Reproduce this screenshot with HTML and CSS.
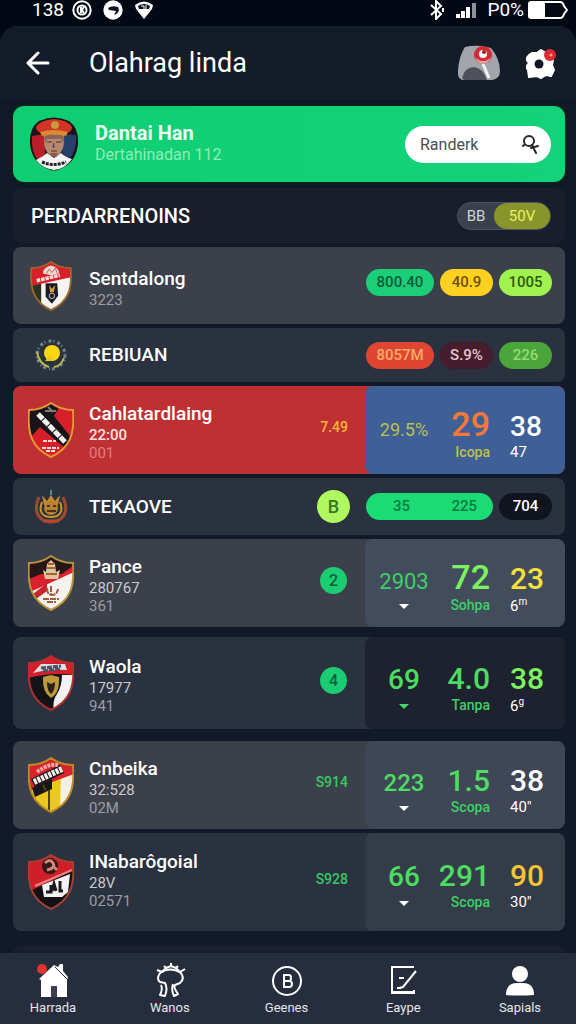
FILE: index.html
```html
<!DOCTYPE html>
<html lang="id">

<head>
    <meta charset="utf-8">
    <meta name="viewport" content="width=device-width, initial-scale=1">
    <title>Olahrag linda</title>
    <link rel="stylesheet" href="styles.css">
</head>

<body>
    <!-- shared shield outline -->
    <svg class="defs" width="0" height="0" aria-hidden="true">
        <defs>
            <path id="shield" d="M23 1C30 6 37 8 45 8C47 32 42 46 23 55C4 46 -1 32 1 8C9 8 16 6 23 1Z" />
            <clipPath id="shieldClip"><use href="#shield" /></clipPath>
        </defs>
    </svg>

    <div class="statusBar">
        <span>138</span>
        <svg width="20" height="20" viewBox="0 0 20 20" fill="none" stroke="#fff" stroke-width="2">
            <circle cx="10" cy="10" r="8.700" />
            <circle cx="10" cy="10" r="4.500" />
            <path d="M9 7v6M12 7l-2 3 2 3" stroke-width="2" />
        </svg>
        <svg class="gapLeft" width="20" height="20" viewBox="0 0 20 20">
            <circle cx="10" cy="10" r="9.700" fill="#fff" />
            <path d="M5 8q4-3 10-1l1 3q-1 4-5 5l2-4-7-1z" fill="#0b111c" />
        </svg>
        <svg class="gapLeft" width="20" height="20" viewBox="0 0 20 20">
            <path d="M1 5Q10-2 19 5L18 9 10 19 2 9z" fill="#fff" />
            <path d="M4 6q6-4 12 0l-1 3H5z" fill="#0b111c" />
            <path d="M7 6h3v4M12 5v5" stroke="#fff" fill="none" />
        </svg>
        <div class="statusRight">
            <svg width="16" height="20" viewBox="0 0 16 20" fill="none" stroke="#fff" stroke-width="2">
                <path d="M2 5l10 9-5 5V1l5 5-10 9M14 8v4" />
            </svg>
            <svg class="signal" width="21" height="17" viewBox="0 0 21 17" fill="#fff">
                <path d="M0 12h4v4H0zM5 9h4v7H5zM10 5h4v11h-4z" />
                <path d="M16 1h4v15h-4z" fill="#8c929c" />
            </svg>
            <span>P0%</span>
            <svg width="40" height="18" viewBox="0 0 40 18">
                <path d="M3 1h29q3 0 4 4l3 4-3 4q-1 4-4 4H3q-2 0-2-2V3q0-2 2-2z" fill="#050a14" stroke="#fff" stroke-width="2" />
                <path d="M2 2h15v14H2z" fill="#fff" />
            </svg>
        </div>
    </div>

    <div class="app">
        <header class="appBar">
            <button class="iconBtn" type="button" aria-label="Kembali">
                <svg width="24" height="24" viewBox="0 0 24 24" fill="none" stroke="#fff" stroke-width="3" stroke-linecap="round" stroke-linejoin="round">
                    <path d="M22 12H3M12 2L2 12l10 10" />
                </svg>
            </button>
            <h1>Olahrag linda</h1>
            <button class="iconBtn" type="button" aria-label="Cari pemain">
                <svg width="42" height="36" viewBox="0 0 42 36">
                    <path d="M7 2Q20-1 33 3Q42 14 42 26Q42 34 34 35H5Q-1 34 0 25Q1 11 7 2Z" fill="#a2a5ab" />
                    <path d="M4 33Q7 22 16 22Q25 23 29 35H6Z" fill="#4e515a" />
                    <path d="M25 19l6 14" stroke="#f2f2f2" stroke-width="3" />
                    <circle cx="25" cy="10" r="9" fill="#d22a30" />
                    <path d="M17 12q2 7 8 7t8-7q-3 4-8 4t-8-4z" fill="#d9a5a6" />
                    <circle cx="25" cy="9" r="4" fill="#fff" />
                    <circle cx="26" cy="7" r="2" fill="#8e1c24" />
                </svg>
            </button>
            <button class="iconBtn gear" type="button" aria-label="Setelan">
                <svg width="30" height="31" viewBox="0 0 30 31">
                    <path d="M6 5l5 0 4-3 5 3 6 1 1 6-1 5 2 5-3 6-5-1-5 3-4-2-8 1-1-7-2-3 3-4-3-4 3-4z" fill="#fff" stroke="#fff" stroke-width="2" stroke-linejoin="round" />
                    <circle cx="13" cy="16" r="4.500" fill="#101624" />
                    <circle cx="24" cy="7" r="6" fill="#dc2b30" />
                    <circle cx="25" cy="7" r="1.500" fill="#f79a9c" />
                </svg>
            </button>
        </header>

        <main class="list">
            <section class="banner">
                <svg class="avatar" width="50" height="54" viewBox="0 0 50 54">
                    <path d="M10 4Q25-3 40 4Q50 11 49 27Q47 46 31 52Q25 55 19 52Q3 46 1 27Q0 11 10 4Z" fill="#1c1419" />
                    <path d="M3 19l13-2v21L9 43Q2 35 3 19z" fill="#b81f28" />
                    <path d="M34 17l13 1Q48 34 40 42l-7-4z" fill="#263f6d" />
                    <path d="M7 43Q15 39 18 36l7 5 7-5q4 4 11 6Q36 52 25 53 13 51 7 43z" fill="#f4f4f2" />
                    <path d="M15 17h20q1 13-3 18-3 5-7 5t-7-5q-4-6-3-18z" fill="#b48871" />
                    <path d="M15 20q3-3 10-2 8-1 10 2l-1 7-2-5H18l-2 5z" fill="#8e6450" />
                    <path d="M18 25h5M27 25h5M22 34h6M25 26l-1 4h2" stroke="#4a2e27" stroke-width="1" fill="none" />
                    <path d="M21 36h8l-2 4h-4z" fill="#8a5a48" />
                    <path d="M7 10Q11 3 25 2 39 3 43 10 43 15 38 16H12Q7 14 7 10z" fill="#d13325" />
                    <path d="M11 15q14-4 28 0l-2 4q-12-4-24 0z" fill="#dc8a2e" />
                    <circle cx="26" cy="8" r="4" fill="#c9973c" />
                    <path d="M13 45q12 5 24 0" stroke="#22222a" stroke-width="3" stroke-dasharray="3 1" fill="none" />
                </svg>
                <div class="info">
                    <h2>Dantai Han</h2>
                    <p>Dertahinadan 112</p>
                </div>
                <form class="search">
                    <input type="text" aria-label="Cari" placeholder="Randerk">
                    <button class="iconBtn" type="button" aria-label="Cari">
                        <svg width="18" height="20" viewBox="0 0 18 20" fill="none" stroke="#26282c" stroke-width="2" stroke-linecap="round">
                            <circle cx="8" cy="7" r="5" />
                            <path d="M3 11l-1 1M11 11l4 8M10 14l7-2" />
                        </svg>
                    </button>
                </form>
            </section>

            <section class="row heading">
                <h2>PERDARRENOINS</h2>
                <div class="toggle">
                    <button type="button">BB</button>
                    <button type="button" class="on">50V</button>
                </div>
            </section>

            <section class="row light medium">
                <div class="crest">
                    <svg width="42" height="50" viewBox="0 0 46 56">
                        <g clip-path="url(#shieldClip)">
                            <path d="M0 0h46v56H0z" fill="#f5f4f1" />
                            <path d="M0 27l12-2v25L0 40z" fill="#2b3420" />
                            <path d="M0 0h46v18L0 28z" fill="#d8202a" />
                            <path d="M14 14q0-7 9-9 9 2 9 9l-9 2z" fill="#eed9d1" />
                            <path d="M18 14l3-5 3 4 4-5 2 6" stroke="#aa6255" fill="none" />
                            <path d="M7 22l26-6" stroke="#f6dede" stroke-width="4" stroke-dasharray="4 1" />
                            <path d="M17 25h13l1 14-7 9-7-8z" fill="#1b1c25" />
                            <path d="M21 27l3 4 4-4-2 8h-4z" fill="#dc9b34" />
                            <circle cx="24" cy="39" r="3" fill="none" stroke="#d8dae0" />
                        </g>
                        <use href="#shield" fill="none" stroke="#9c6a2c" stroke-width="2" />
                    </svg>
                </div>
                <div class="info">
                    <h3>Sentdalong</h3>
                    <p class="dim">3223</p>
                </div>
                <div class="pills">
                    <span class="pill wide green">800.40</span>
                    <span class="pill yellow">40.9</span>
                    <span class="pill lime">1005</span>
                </div>
            </section>

            <section class="row small">
                <div class="crest">
                    <svg width="36" height="34" viewBox="0 0 36 34">
                        <circle cx="18" cy="17" r="14" fill="none" stroke="#71868b" stroke-width="3" stroke-dasharray="3 2 1 3" />
                        <path d="M4 14q2 12 12 15M31 20q-3 8-10 9" fill="none" stroke="#b4b950" stroke-width="2" />
                        <circle cx="18" cy="16" r="10" fill="#26333a" />
                        <circle cx="19" cy="15" r="8" fill="#f8d613" />
                        <path d="M12 23l5-6 4 6z" fill="#e8cb1c" />
                    </svg>
                </div>
                <div class="info">
                    <h3>REBIUAN</h3>
                </div>
                <div class="pills">
                    <span class="pill wide red">8057M</span>
                    <span class="pill maroon">S.9%</span>
                    <span class="pill moss">226</span>
                </div>
            </section>

            <section class="row live">
                <div class="crest">
                    <svg width="46" height="56" viewBox="0 0 46 56">
                        <g clip-path="url(#shieldClip)">
                            <path d="M0 0h46v56H0z" fill="#d61f28" />
                            <path d="M0 0h34L26 14 45 38 38 47 12 25 0 38z" fill="#17151a" />
                            <path d="M10 12l27 28" stroke="#f4f1ef" stroke-width="5" stroke-dasharray="7 1" />
                            <path d="M17 9h11M20 5l5 5" stroke="#7c7d77" stroke-width="2" />
                            <path d="M15 39h13M14 46h17M18 49h9" stroke="#f4dcda" stroke-width="2" stroke-dasharray="4 1" />
                        </g>
                        <use href="#shield" fill="none" stroke="#e59a35" stroke-width="2" />
                    </svg>
                </div>
                <div class="info">
                    <h3>Cahlatardlaing</h3>
                    <p class="strong">22:00</p>
                    <p class="faint">001</p>
                </div>
                <span class="mark gold">7.49</span>
                <div class="stats blue">
                    <div class="stat first gold2">
                        <div class="value"><span class="n18">29.5%</span></div>
                    </div>
                    <div class="stat second">
                        <div class="value orange"><span class="n34">29</span></div>
                        <div class="label gold2">Icopa</div>
                    </div>
                    <div class="stat third">
                        <div class="value"><span class="n28">38</span></div>
                        <div class="label">47</div>
                    </div>
                </div>
            </section>

            <section class="row small total">
                <div class="crest">
                    <svg width="36" height="36" viewBox="0 0 36 36" fill="none">
                        <path d="M6 8Q-1 24 10 31q8 4 16 0Q37 24 30 8" stroke="#a04a2e" stroke-width="3" />
                        <path d="M9 13Q5 23 12 27q6 2 12 0 7-4 3-14" stroke="#c7962f" stroke-width="2" />
                        <path d="M9 6l5 6 4-6 4 6 5-6-2 10H11z" fill="#c38b2d" />
                        <circle cx="18" cy="19" r="7" fill="#b9812b" />
                        <path d="M14 17h3M20 17h3M14 22h9" stroke="#49301f" stroke-width="2" />
                        <path d="M10 32h16" stroke="#bb472f" stroke-width="3" />
                        <path d="M18 1v5" stroke="#4f9480" stroke-width="2" />
                    </svg>
                </div>
                <div class="info">
                    <h3>TEKAOVE</h3>
                </div>
                <span class="dot big">B</span>
                <div class="pills">
                    <span class="pill double"><span>35</span><span>225</span></span>
                    <span class="pill black">704</span>
                </div>
            </section>

            <section class="row light">
                <div class="crest">
                    <svg width="46" height="56" viewBox="0 0 46 56">
                        <g clip-path="url(#shieldClip)">
                            <path d="M0 0h46v56H0z" fill="#f5f1ee" />
                            <path d="M0 0h46v17L0 38z" fill="#d9222b" />
                            <path d="M0 0h46v10L34 19H13L1 24z" fill="#281518" />
                            <path d="M5 39l14-11v8L8 44z" fill="#c9252b" />
                            <path d="M15 15l3 2 1-8 4-4 4 4 1 8 4-2-2 9H17z" fill="#dec6a2" />
                            <path d="M19 13h8M18 19h11M20 9h6" stroke="#a4662e" stroke-width="2" />
                            <path d="M19 33q0 7 5 7t6-6M23 31v8M15 44h16M19 47h9" stroke="#9c5e3e" stroke-width="2" fill="none" stroke-dasharray="6 1" />
                        </g>
                        <use href="#shield" fill="none" stroke="#b4953c" stroke-width="2" />
                    </svg>
                </div>
                <div class="info">
                    <h3>Pance</h3>
                    <p>280767</p>
                    <p class="dim">361</p>
                </div>
                <span class="dot">2</span>
                <div class="stats slate">
                    <div class="stat first">
                        <div class="value green1"><span class="n22">2903</span></div>
                        <svg class="caret" width="12" height="18" viewBox="0 0 12 18"><path d="M1 7h10L6 12z" fill="#fff" /></svg>
                    </div>
                    <div class="stat second">
                        <div class="value green2"><span class="n34">72</span></div>
                        <div class="label green1">Sohpa</div>
                    </div>
                    <div class="stat third">
                        <div class="value yellow1"><span class="n30">23</span></div>
                        <div class="label">6<sup>m</sup></div>
                    </div>
                </div>
            </section>

            <section class="row spaced">
                <div class="crest">
                    <svg width="46" height="56" viewBox="0 0 46 56">
                        <g clip-path="url(#shieldClip)">
                            <path d="M0 0h46v56H0z" fill="#141317" />
                            <path d="M0 0h46v20Q23 17 0 23z" fill="#d51f2a" />
                            <path d="M5 18l8-9 24 0 2 6q-18-1-34 3z" fill="#dfe1e6" />
                            <path d="M13 13l20-2M15 16l17-2" stroke="#4b5262" stroke-width="3" stroke-dasharray="5 1" />
                            <path d="M34 20h12v19L26 56q-2-10 3-17 5-8 5-19z" fill="#f3f2f2" />
                            <path d="M15 22l8-2 8 2q1 16-8 21-9-6-8-21z" fill="#bd983c" />
                            <path d="M19 27l4 2 4-2q0 9-4 12-4-3-4-12z" fill="#29231b" />
                        </g>
                        <use href="#shield" fill="none" stroke="#b3302e" stroke-width="2" />
                    </svg>
                </div>
                <div class="info">
                    <h3>Waola</h3>
                    <p>17977</p>
                    <p class="dim">941</p>
                </div>
                <span class="dot">4</span>
                <div class="stats night">
                    <div class="stat first">
                        <div class="value green3"><span class="n28">69</span></div>
                        <svg class="caret" width="12" height="18" viewBox="0 0 12 18"><path d="M1 7h10L6 12z" fill="#43d866" /></svg>
                    </div>
                    <div class="stat second">
                        <div class="value green3"><span class="n30">4.0</span></div>
                        <div class="label green1">Tanpa</div>
                    </div>
                    <div class="stat third">
                        <div class="value green2"><span class="n30">38</span></div>
                        <div class="label">6<sup>g</sup></div>
                    </div>
                </div>
            </section>

            <section class="row light spaced">
                <div class="crest">
                    <svg width="46" height="56" viewBox="0 0 46 56">
                        <g clip-path="url(#shieldClip)">
                            <path d="M0 0h46v56H0z" fill="#ecc91d" />
                            <path d="M33 18l13-2v26L32 52z" fill="#f4f0e2" />
                            <path d="M0 0h46v17L0 34z" fill="#d9232a" />
                            <path d="M4 31l20-9v10L7 40z" fill="#17161a" />
                            <path d="M5 26l29-14" stroke="#18161a" stroke-width="9" />
                            <path d="M6 25l28-13" stroke="#f4ede7" stroke-width="6" stroke-dasharray="3 1" />
                            <path d="M9 15q12-9 21-7" stroke="#f2aaa6" stroke-width="4" stroke-dasharray="3 1" fill="none" />
                            <path d="M15 28l3 6M21 33v20" stroke="#4e4015" stroke-width="2" />
                        </g>
                        <use href="#shield" fill="none" stroke="#bf8b27" stroke-width="2" />
                    </svg>
                </div>
                <div class="info">
                    <h3>Cnbeika</h3>
                    <p>32:528</p>
                    <p class="dim">02M</p>
                </div>
                <span class="mark">S914</span>
                <div class="stats steel">
                    <div class="stat first">
                        <div class="value green3"><span class="n24">223</span></div>
                        <svg class="caret" width="12" height="18" viewBox="0 0 12 18"><path d="M1 7h10L6 12z" fill="#fff" /></svg>
                    </div>
                    <div class="stat second">
                        <div class="value green3"><span class="n30">1.5</span></div>
                        <div class="label green1">Scopa</div>
                    </div>
                    <div class="stat third">
                        <div class="value"><span class="n30">38</span></div>
                        <div class="label">40"</div>
                    </div>
                </div>
            </section>

            <section class="row tall">
                <div class="crest">
                    <svg width="46" height="56" viewBox="0 0 46 56">
                        <g clip-path="url(#shieldClip)">
                            <path d="M0 0h46v56H0z" fill="#121115" />
                            <path d="M0 0h46v16L0 38z" fill="#cf2029" />
                            <path d="M7 32L44 16" stroke="#ee8580" stroke-width="2" />
                            <circle cx="22" cy="12" r="8" fill="#30171a" />
                            <path d="M17 9q5-5 8 0t-6 7M26 13l3 3" stroke="#d08a73" stroke-width="3" fill="none" />
                            <path d="M14 31l28-11-2 18-6 5H16z" fill="#f3f3f3" />
                            <path d="M18 38h5v-7M24 37l2-7 2 7M32 27v10h3" stroke="#1b1a20" stroke-width="3" fill="none" />
                        </g>
                        <use href="#shield" fill="none" stroke="#a8412f" stroke-width="2" />
                    </svg>
                </div>
                <div class="info">
                    <h3>INabarôgoial</h3>
                    <p>28V</p>
                    <p class="dim">02571</p>
                </div>
                <span class="mark">S928</span>
                <div class="stats stone">
                    <div class="stat first">
                        <div class="value green3"><span class="n28">66</span></div>
                        <svg class="caret" width="12" height="18" viewBox="0 0 12 18"><path d="M1 7h10L6 12z" fill="#fff" /></svg>
                    </div>
                    <div class="stat second">
                        <div class="value green3"><span class="n30">291</span></div>
                        <div class="label green1">Scopa</div>
                    </div>
                    <div class="stat third">
                        <div class="value amber"><span class="n30">90</span></div>
                        <div class="label">30"</div>
                    </div>
                </div>
            </section>

            <section class="row heading spaced"></section>
        </main>

        <nav class="tabs">
            <a href="#">
                <svg width="36" height="36" viewBox="0 0 36 36">
                    <path d="M6 35V18L4 17 19 3l4 2 2-3h3v7l5 6-1 3v17z" fill="#fff" />
                    <path d="M20 5l12 12" stroke="#252d3d" stroke-width="1" />
                    <path d="M16 24h6v11h-6z" fill="#384051" />
                    <circle cx="7" cy="7" r="5" fill="#e0352f" />
                </svg>
                Harrada
            </a>
            <a href="#">
                <svg width="36" height="36" viewBox="0 0 36 36" fill="none" stroke="#fff" stroke-width="2" stroke-linejoin="round">
                    <path d="M8 11q10-7 21 0 4 6-1 10l-5 2q-2 2 3 9l-4 2q-3-6-1-12M8 11q-4 6 0 9l5 1q3 5 0 13l-5-1q3-6 1-10" />
                    <path d="M5 8l5 2 4-4 5-2 5 2 4 4 5-3M19 4V1M14 6l-2-2M24 6l2-2" />
                </svg>
                Wanos
            </a>
            <a href="#">
                <svg width="36" height="36" viewBox="0 0 36 36" fill="none" stroke="#fff" stroke-width="2">
                    <circle cx="18" cy="19" r="14" />
                    <path d="M15 13h5q2 0 2 3t-2 3h-5zM15 19h5q3 0 3 3t-3 3h-5z" />
                </svg>
                Geenes
            </a>
            <a href="#">
                <svg width="36" height="36" viewBox="0 0 36 36" fill="none" stroke="#fff" stroke-width="2">
                    <path d="M29 5H7v26h22v-3M8 30h20" />
                    <path d="M31 9L18 25l-4 1M14 16h5M12 26h4" />
                </svg>
                Eaype
            </a>
            <a href="#">
                <svg width="36" height="36" viewBox="0 0 36 36" fill="#fff">
                    <circle cx="18" cy="12" r="8" />
                    <path d="M4 33q0-12 11-12h6q11 0 11 12-14 1-28 0z" />
                </svg>
                Sapials
            </a>
        </nav>
    </div>
</body>

</html>
```

FILE: styles.css
```css
* {
    box-sizing: border-box;
}

body {
    margin: 0;
    height: 100vh;
    display: flex;
    flex-direction: column;
    overflow: hidden;
    background: #030914;
    color: #fff;
    font-family: Roboto, "Liberation Sans", sans-serif;
}

h1, h2, h3, p {
    margin: 0;
}

svg {
    display: block;
    flex: none;
}

.defs {
    position: absolute;
}

button {
    font-family: inherit;
    color: inherit;
    border: 0;
    background: none;
    padding: 0;
}

/* status bar */
.statusBar {
    display: flex;
    align-items: center;
    gap: 8px;
    height: 26px;
    padding: 0 8px 6px 32px;
    font-size: 19px;
    line-height: 20px;
}

.gapLeft {
    margin-left: 3px;
}

.statusRight {
    display: flex;
    align-items: center;
    gap: 4px;
    margin-left: auto;
}

.signal {
    margin: 0 6px 0 7px;
}

.app {
    flex: 1;
    min-height: 0;
    display: flex;
    flex-direction: column;
    background: #121929;
    border-radius: 18px 18px 0 0;
    overflow: hidden;
}

.appBar {
    display: flex;
    align-items: center;
    height: 75px;
    flex: none;
    padding: 0 20px 0 26px;
    background: #151c29;
    border-bottom: 1px solid #101625;
}

.appBar h1 {
    flex: 1;
    padding-left: 39px;
    font-size: 27px;
    font-weight: 400;
}

.gear {
    margin-left: 26px;
}

/* list of rows */
.list {
    flex: 1;
    min-height: 0;
    overflow: hidden;
    display: flex;
    flex-direction: column;
    gap: 4px;
    padding: 5px 11px 0 13px;
}

.banner {
    display: flex;
    align-items: center;
    flex: none;
    height: 76px;
    margin-bottom: 2px;
    padding: 0 14px 0 16px;
    border-radius: 11px;
    background: linear-gradient(90deg, #0fce72, #14d279);
    box-shadow: 0 0 3px 2px #06231f;
}

.banner .info {
    padding: 0 0 0 16px;
}

.banner h2 {
    font-size: 20px;
    line-height: 22px;
    font-weight: 700;
    color: #e9fff2;
}

.banner p {
    font-size: 16px;
    line-height: 22px;
    font-weight: 400;
    color: #8eedb8;
}

.search {
    display: flex;
    align-items: center;
    width: 146px;
    height: 37px;
    padding: 0 12px 0 15px;
    border-radius: 19px;
    background: #fff;
}

.search input {
    flex: 1;
    min-width: 0;
    border: 0;
    padding: 0;
    background: none;
    outline: none;
    font: 400 16px Roboto, "Liberation Sans", sans-serif;
}

.search input::placeholder {
    color: #4b4d50;
    opacity: 1;
}

.row {
    display: flex;
    align-items: center;
    flex: none;
    height: 88px;
    border-radius: 8px;
    background: #2a313f;
    overflow: hidden;
}

.light {
    background: #3c404b;
}

.heading {
    height: 55px;
    padding: 0 14px 0 18px;
    background: #191e2d;
}

.heading h2 {
    flex: 1;
    font-size: 20px;
    font-weight: 500;
}

.medium {
    height: 77px;
}

.small {
    height: 54px;
}

.total {
    height: 57px;
}

.spaced {
    height: 92px;
    margin-top: 6px;
}

.light.spaced {
    height: 88px;
    margin-top: 8px;
}

.tall {
    height: 98px;
}

.heading.spaced {
    margin-top: 10px;
}

.live {
    background: #bf3033;
}

.crest {
    width: 76px;
    flex: none;
    display: flex;
    justify-content: center;
}

.info {
    flex: 1;
    min-width: 0;
    padding-top: 4px;
}

.small .info {
    padding-top: 0;
}

.tall .info {
    padding: 0 0 4px;
}

.info h3 {
    font-size: 19px;
    line-height: 24px;
    font-weight: 500;
}

.row .info p {
    font-size: 15px;
    line-height: 18px;
    color: #c8cad0;
}

.row .info .dim {
    color: #9a9da7;
}

.row .info .strong {
    color: #fbe3e3;
    font-weight: 500;
}

.row .info .faint {
    color: #e17e80;
}

/* two part switch */
.toggle {
    display: flex;
    width: 94px;
    height: 28px;
    border-radius: 14px;
    background: #3b404d;
    border: 1px solid #4e5461;
}

.toggle button {
    flex: 1;
    font-size: 15px;
    color: #d0d3d9;
}

.toggle .on {
    flex: none;
    width: 56px;
    border-radius: 14px;
    background: #87952a;
    color: #e7f265;
}

.pills {
    display: flex;
    gap: 6px;
    padding-right: 13px;
    text-align: center;
}

.medium .pills {
    padding-bottom: 6px;
}

.pill {
    width: 53px;
    height: 27px;
    border-radius: 14px;
    font-size: 15px;
    line-height: 27px;
    font-weight: 500;
}

.wide {
    width: 68px;
}

.green {
    background: #1bcf79;
    color: #0c5a35;
}

.yellow {
    background: #fdd022;
    color: #6d5108;
}

.lime {
    background: #a0f34e;
    color: #315814;
}

.red {
    background: #de4633;
    color: #f7ad62;
}

.maroon {
    background: #461d2c;
    color: #e9c3cb;
}

.moss {
    background: #4ba53a;
    color: #93dd70;
}

.double {
    display: flex;
    justify-content: space-between;
    width: 127px;
    padding: 0 16px 0 27px;
    background: #1bdc74;
    color: #0d7a43;
}

.black {
    background: #10141f;
    color: #fff;
}

.mark {
    margin-right: 17px;
    font-size: 14px;
    font-weight: 500;
    color: #38c964;
}

.dot {
    width: 27px;
    height: 27px;
    margin-right: 18px;
    border-radius: 50%;
    background: #1ccc73;
    color: #0b5f38;
    font-size: 16px;
    line-height: 27px;
    font-weight: 500;
    text-align: center;
}

.dot.big {
    width: 33px;
    height: 33px;
    margin-right: 16px;
    background: #b0f860;
    color: #3d7526;
    font-size: 18px;
    line-height: 33px;
}

.row .mark, .row .dot {
    margin-top: -6px;
}

.row .dot.big {
    margin-top: 0;
}

/* number panel at the right of a row */
.stats {
    display: flex;
    align-self: stretch;
    align-items: center;
    flex: none;
    width: 200px;
    padding-top: 4px;
    border-radius: 8px;
}

.tall .stats {
    padding: 0;
}

.stat {
    height: 56px;
}

.first {
    width: 78px;
    text-align: center;
}

.second {
    width: 47px;
    display: flex;
    flex-direction: column;
    align-items: flex-end;
}

.third {
    padding-left: 20px;
}

.value {
    height: 40px;
    font-size: 34px;
    line-height: 40px;
    font-weight: 500;
    white-space: nowrap;
}

.value span {
    line-height: 1;
}

.label {
    font-size: 15px;
    line-height: 16px;
    white-space: nowrap;
}

.second .label {
    font-size: 14px;
    font-weight: 500;
}

.label sup {
    font-size: 10px;
    line-height: 1;
}

.caret {
    margin: 0 auto;
}

.n18 {
    font-size: 18px;
    font-weight: 400;
}

.n22 {
    font-size: 22px;
    font-weight: 400;
}

.n24 {
    font-size: 24px;
}

.n28 {
    font-size: 28px;
}

.n30 {
    font-size: 30px;
}

.n34 {
    font-size: 34px;
}

.blue {
    background: #3e6097;
}

.slate {
    background: #424c5c;
}

.night {
    background: #1e222e;
}

.steel {
    background: #3f4655;
}

.stone {
    background: #343c4a;
}

.gold {
    color: #f9b53a;
}

.gold2 {
    color: #bfc04e;
}

.orange {
    color: #f5783a;
}

.amber {
    color: #f4c437;
}

.yellow1 {
    color: #f7e23c;
}

.green1 {
    color: #3fce68;
}

.green2 {
    color: #7df260;
}

.green3 {
    color: #4ddc62;
}

/* bottom navigation */
.tabs {
    display: flex;
    justify-content: space-between;
    flex: none;
    height: 71px;
    padding: 9px 24px 0 21px;
    background: #262e3e;
}

.tabs a {
    display: flex;
    flex-direction: column;
    align-items: center;
    width: 64px;
    font-size: 13px;
    line-height: 20px;
    color: #e4e6ea;
    text-decoration: none;
}
```
